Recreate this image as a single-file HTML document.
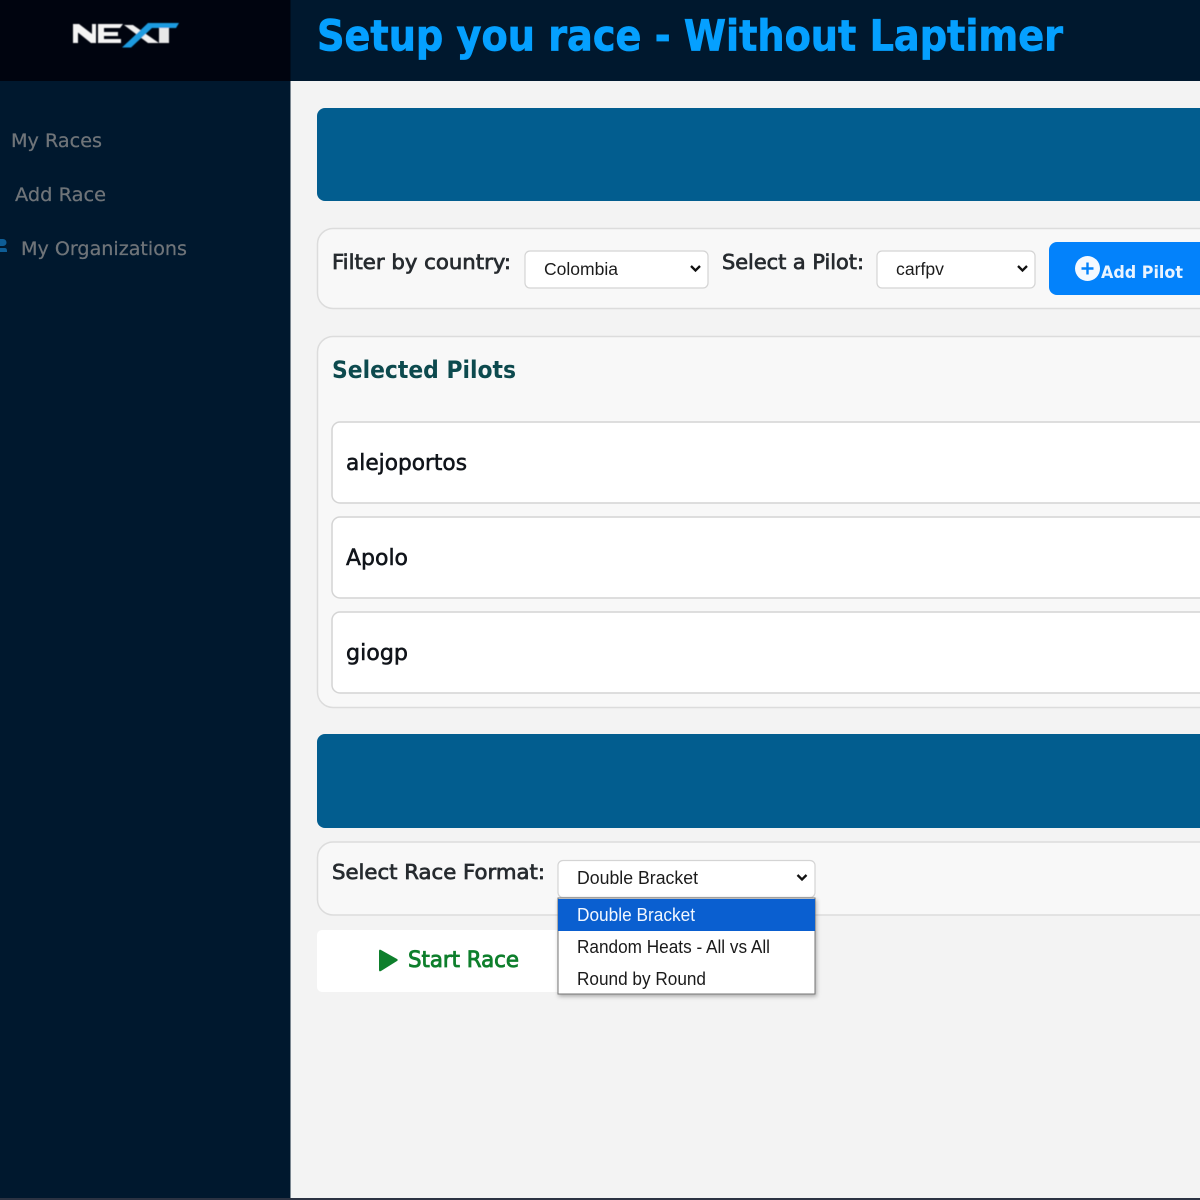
<!DOCTYPE html>
<html lang="en"><head><meta charset="utf-8"><title>Setup you race</title>
<style>
html,body{margin:0;padding:0;width:1200px;height:1200px;overflow:hidden;background:#f3f3f3}
svg{display:block}
text{font-family:"Liberation Sans",sans-serif}
.p{font-family:"DejaVu Sans","Liberation Sans",sans-serif}
</style></head><body>
<svg width="1200" height="1200" viewBox="0 0 1200 1200" xmlns="http://www.w3.org/2000/svg">
<defs><filter id="s" x="-10%" y="-10%" width="120%" height="125%"><feDropShadow dx="1" dy="2" stdDeviation="2" flood-color="#000" flood-opacity=".3"/></filter>
<filter id="b" x="-5%" y="-5%" width="110%" height="110%"><feGaussianBlur stdDeviation=".5"/></filter></defs>
<rect width="1200" height="1200" fill="#f3f3f3"/>
<!-- sidebar -->
<rect x="0" y="0" width="290.500" height="1200" fill="#00182e"/>
<rect x="0" y="0" width="290.500" height="81" fill="#00040f"/>
<rect x="290.500" y="0" width="909.500" height="81" fill="#00182e"/>
<rect x="0" y="1198" width="1200" height="2" fill="#2b3242"/>
<!-- logo -->
<g filter="url(#b)">
<path d="M73 24h6l13 10V24h4v19h-5L78 32.500V43h-5z" fill="#f4f4f4"/>
<path d="M98 24h25l-3 4h-16v4h14v4h-14v3h17v4H98z" fill="#f4f4f4"/>
<path d="M124 25h9l26 18h-11z" fill="#f0f0f0"/>
<path d="M159 28h10v15h-10z" fill="#e8e8e8"/>
<path d="M122 47.500l26-24.500h31l-3 5h-24l-21 19.500z" fill="#1d9be0"/>
</g>
<!-- sidebar nav -->
<text class="p" x="11" y="147" font-size="19" fill="#6f7479" stroke="#6f7479" stroke-width=".25" textLength="91" lengthAdjust="spacingAndGlyphs">My Races</text>
<text class="p" x="15" y="201" font-size="19" fill="#6f7479" stroke="#6f7479" stroke-width=".25" textLength="91" lengthAdjust="spacingAndGlyphs">Add Race</text>
<text class="p" x="21" y="255" font-size="19" fill="#6f7479" stroke="#6f7479" stroke-width=".25" textLength="166" lengthAdjust="spacingAndGlyphs">My Organizations</text>
<path d="M0 239h3a3 3 0 0 1 0 7H0zM0 248h5q2 0 2 3v1H0z" fill="#0e5d96"/>
<!-- title -->
<text class="p" x="317" y="50.500" font-size="43" font-weight="700" fill="#05a0ff" stroke="#05a0ff" stroke-width=".8" textLength="746" lengthAdjust="spacingAndGlyphs">Setup you race - Without Laptimer</text>
<!-- banners -->
<path d="M1200 108H325a8 8 0 0 0-8 8v77a8 8 0 0 0 8 8h875z" fill="#025d8f"/>
<path d="M1200 734H325a8 8 0 0 0-8 8v78a8 8 0 0 0 8 8h875z" fill="#025d8f"/>
<!-- filter card -->
<path d="M1201 228.500H333a15.500 15.500 0 0 0-15.500 15.500v49a15.500 15.500 0 0 0 15.500 15.500h868" fill="#f8f8f8" stroke="#dcdcdc" stroke-width="1.500"/>
<text class="p" x="332" y="269" font-size="20" fill="#262b2f" stroke="#262b2f" stroke-width=".7" textLength="179" lengthAdjust="spacingAndGlyphs">Filter by country:</text>
<rect x="525" y="251" width="183" height="37" rx="5" fill="#fff" stroke="#d4d4d4" stroke-width="1.200"/>
<text x="544" y="275" font-size="17.500" fill="#1c1c1c" textLength="74" lengthAdjust="spacingAndGlyphs">Colombia</text>
<path d="M691 266l4.500 4.500 4.500-4.500" fill="none" stroke="#111" stroke-width="2.300"/>
<text class="p" x="722" y="269" font-size="20" fill="#262b2f" stroke="#262b2f" stroke-width=".7" textLength="142" lengthAdjust="spacingAndGlyphs">Select a Pilot:</text>
<rect x="877" y="251" width="158" height="37" rx="5" fill="#fff" stroke="#d4d4d4" stroke-width="1.200"/>
<text x="896" y="275" font-size="17.500" fill="#1c1c1c" textLength="48" lengthAdjust="spacingAndGlyphs">carfpv</text>
<path d="M1018 266l4.500 4.500 4.500-4.500" fill="none" stroke="#111" stroke-width="2.300"/>
<path d="M1200 242h-143a8 8 0 0 0-8 8v37a8 8 0 0 0 8 8h143z" fill="#0382fb"/>
<circle cx="1087.500" cy="268.500" r="12.500" fill="#f4f9ff"/>
<path d="M1087.500 262.500v12M1081.500 268.500h12" stroke="#0382fb" stroke-width="2.400"/>
<text class="p" x="1101" y="278" font-size="17" font-weight="700" fill="#eaf4ff" textLength="82" lengthAdjust="spacingAndGlyphs">Add Pilot</text>
<!-- selected pilots card -->
<path d="M1201 336.500H333a15.500 15.500 0 0 0-15.500 15.500v340a15.500 15.500 0 0 0 15.500 15.500h868" fill="#f8f8f8" stroke="#dcdcdc" stroke-width="1.500"/>
<text class="p" x="332" y="378" font-size="24" font-weight="700" fill="#0d4a4e" textLength="184" lengthAdjust="spacingAndGlyphs">Selected Pilots</text>
<path d="M1201 422H340a8 8 0 0 0-8 8v65a8 8 0 0 0 8 8h861" fill="#fff" stroke="#d4d4d4" stroke-width="1.500"/>
<path d="M1201 517H340a8 8 0 0 0-8 8v65a8 8 0 0 0 8 8h861" fill="#fff" stroke="#d4d4d4" stroke-width="1.500"/>
<path d="M1201 612H340a8 8 0 0 0-8 8v65a8 8 0 0 0 8 8h861" fill="#fff" stroke="#d4d4d4" stroke-width="1.500"/>
<text class="p" x="346" y="470" font-size="22" fill="#10141a" stroke="#10141a" stroke-width=".55" textLength="121" lengthAdjust="spacingAndGlyphs">alejoportos</text>
<text class="p" x="346" y="565" font-size="22" fill="#10141a" stroke="#10141a" stroke-width=".55" textLength="62" lengthAdjust="spacingAndGlyphs">Apolo</text>
<text class="p" x="346" y="660" font-size="22" fill="#10141a" stroke="#10141a" stroke-width=".55" textLength="62" lengthAdjust="spacingAndGlyphs">giogp</text>
<!-- race format card -->
<path d="M1201 842H333a15.500 15.500 0 0 0-15.500 15.500v42a15.500 15.500 0 0 0 15.500 15.500h868" fill="#f8f8f8" stroke="#dcdcdc" stroke-width="1.500"/>
<text class="p" x="332" y="879" font-size="20" fill="#262b2f" stroke="#262b2f" stroke-width=".7" textLength="213" lengthAdjust="spacingAndGlyphs">Select Race Format:</text>
<rect x="558" y="860.500" width="257" height="37" rx="5" fill="#fff" stroke="#d4d4d4" stroke-width="1.200"/>
<text x="577" y="884" font-size="18" fill="#1c1c1c" textLength="121" lengthAdjust="spacingAndGlyphs">Double Bracket</text>
<path d="M797.500 875l4.500 4.500 4.500-4.500" fill="none" stroke="#111" stroke-width="2.300"/>
<!-- start race -->
<rect x="317" y="930" width="250" height="62" rx="5" fill="#fff"/>
<path d="M379 951q0-2 2-1l16 9q1.500 1 0 2l-16 10q-2 1-2-1z" fill="#0e7f2c"/>
<text class="p" x="408" y="967" font-size="22" fill="#0e7f2c" stroke="#0e7f2c" stroke-width=".85" textLength="111" lengthAdjust="spacingAndGlyphs">Start Race</text>
<!-- dropdown -->
<g filter="url(#s)"><rect x="558" y="898" width="257" height="96" fill="#fff" stroke="#767676" stroke-width="1"/></g>
<rect x="558" y="899" width="257" height="32" fill="#0a5fd0"/>
<text x="577" y="921" font-size="18" fill="#f2f7ff" textLength="118" lengthAdjust="spacingAndGlyphs">Double Bracket</text>
<text x="577" y="953" font-size="18" fill="#1a1a1a" textLength="193" lengthAdjust="spacingAndGlyphs">Random Heats - All vs All</text>
<text x="577" y="985" font-size="18" fill="#1a1a1a" textLength="129" lengthAdjust="spacingAndGlyphs">Round by Round</text>
</svg>
</body></html>
